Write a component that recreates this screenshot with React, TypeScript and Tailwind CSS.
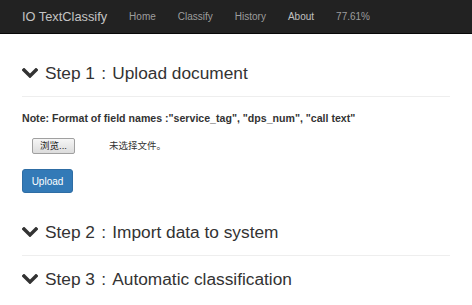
import React from 'react'

const sans = "font-['Liberation_Sans','Noto_Sans_CJK_SC',sans-serif]"

function Chevron() {
  return (
    <svg width="16" height="10" viewBox="0 0 16 10" className="shrink-0">
      <polyline points="2,2 8,8 14,2" fill="none" stroke="#333" strokeWidth="3.4" strokeLinecap="square" />
    </svg>
  )
}

function StepHeading({ step, title, className = '' }: { step: number; title: string; className?: string }) {
  return (
    <div className={`flex items-center gap-[7px] pb-[13px] ${className}`}>
      <Chevron />
      <h3 className="text-[17.3px] leading-[20px] text-[#333]">
        Step {step}
        <span className="inline-block w-[1em] text-center">:</span>
        {title}
      </h3>
    </div>
  )
}

export default function App() {
  const links = ['Home', 'Classify', 'History', 'About', '77.61%']
  return (
    <div className={`${sans} min-h-[305px] bg-white`}>
      {/* navbar */}
      <nav className="flex h-[34px] items-center gap-[22px] border-b border-[#080808] bg-[#222] px-[22px]">
        <span className="text-[12.8px] text-[#c4c4c4]">IO TextClassify</span>
        {links.map((l) => (
          <a key={l} className={`text-[10px] ${l === 'About' ? 'text-[#c0c0c0]' : 'text-[#9d9d9d]'}`}>
            {l}
          </a>
        ))}
      </nav>

      <div className="px-[22px]">
        <StepHeading step={1} title="Upload document" className="mt-[29px] border-b border-[#eee]" />

        <p className="mt-[14px] text-[10.6px] font-bold leading-[14px] text-[#333]">
          Note: Format of field names :"service_tag", "dps_num", "call text"
        </p>

        {/* file input */}
        <div className="mt-[13px] ml-[10px] flex items-center gap-[34px]">
          <button className="h-[16px] w-[43px] rounded-[2px] border border-[#a0a0a0] bg-gradient-to-b from-[#f6f6f6] to-[#dcdcdc] text-[9.5px] leading-[14px] text-[#222]">
            浏览...
          </button>
          <span className="text-[9.5px] text-[#333]">未选择文件。</span>
        </div>

        <button className="mt-[15px] h-[24px] w-[51px] rounded-[3px] border border-[#2e6da4] bg-[#337ab7] text-[10px] text-white">
          Upload
        </button>

        <StepHeading step={2} title="Import data to system" className="mt-[29px] border-b border-[#eee]" />
        <StepHeading step={3} title="Automatic classification" className="mt-[13px]" />
      </div>
    </div>
  )
}
